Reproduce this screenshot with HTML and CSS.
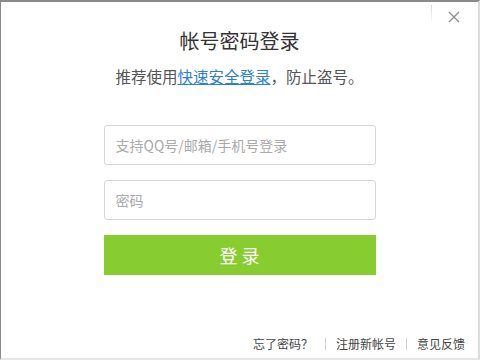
FILE: index.html
```html
<!DOCTYPE html>
<html lang="zh-CN">
<head>
    <meta charset="UTF-8">
    <title>帐号密码登录</title>
    <link rel="stylesheet" href="styles.css">
</head>
<body>
    <div class="window">
        <div class="topbar">
            <span class="divider"></span>
            <button class="close" aria-label="关闭">
                <svg width="12" height="12" viewBox="0 0 12 12">
                    <path d="M1 1L11 11M11 1L1 11" stroke="#8c8c8c" stroke-width="1.3" fill="none"/>
                </svg>
            </button>
        </div>
        <h1 class="title">帐号密码登录</h1>
        <p class="tip">推荐使用<a href="#">快速安全登录</a>，防止盗号。</p>
        <form class="login-form">
            <input class="field" type="text" placeholder="支持QQ号/邮箱/手机号登录">
            <input class="field" type="password" placeholder="密码">
            <button class="submit" type="button">登 录</button>
        </form>
        <div class="links">
            <a href="#">忘了密码？</a>
            <span class="sep"></span>
            <a href="#">注册新帐号</a>
            <span class="sep"></span>
            <a href="#">意见反馈</a>
        </div>
    </div>
</body>
</html>
```

FILE: styles.css
```css
body {
    margin: 0;
    font-family: "Noto Sans CJK SC", "Liberation Sans", sans-serif;
}
.window {
    width: 480px;
    height: 360px;
    box-sizing: border-box;
    border-top: 2px solid #8a8a8a;
    border-left: 1px solid #8a8a8a;
    border-right: 2px solid #dcdcdc;
    border-bottom: 2px solid #e6e6e6;
    background: #fff;
    display: flex;
    flex-direction: column;
    align-items: center;
}
.topbar {
    align-self: stretch;
    height: 22px;
    display: flex;
    justify-content: flex-end;
    align-items: flex-start;
}
.divider {
    width: 1px;
    height: 22px;
    margin-top: 3px;
    background: linear-gradient(#d8d8d8, #fff);
}
.close {
    width: 44px;
    height: 26px;
    border: none;
    background: none;
    padding: 6px 0 0 0;
    margin-right: 2px;
    cursor: pointer;
}
.title {
    margin: 3px 0 0 0;
    font-size: 20px;
    font-weight: normal;
    color: #333;
    line-height: 28px;
}
.tip {
    margin: 10px 0 0 0;
    font-size: 15.5px;
    color: #555;
    line-height: 22px;
}
.tip a {
    color: #2d7fd0;
}
.login-form {
    margin-top: 38px;
    width: 272px;
    display: flex;
    flex-direction: column;
}
.field {
    height: 40px;
    box-sizing: border-box;
    border: 1px solid #d6d6d6;
    border-radius: 3px;
    padding: 0 11px;
    margin-bottom: 15px;
    font-family: inherit;
    font-size: 14px;
    color: #333;
    outline: none;
}
.field::placeholder {
    color: #aaa;
}
.submit {
    height: 40px;
    border: none;
    background: #87cd2f;
    color: #fff;
    font-family: inherit;
    font-size: 18px;
    cursor: pointer;
}
.links {
    margin-top: auto;
    align-self: flex-end;
    margin-right: 13px;
    margin-bottom: 6px;
    display: flex;
    align-items: center;
    gap: 10px;
    font-size: 12px;
}
.links a {
    color: #444;
    text-decoration: none;
}
.links a:first-child {
    margin-right: 2px;
}
.sep {
    width: 1px;
    height: 12px;
    background: #e0c8d8;
}
```
